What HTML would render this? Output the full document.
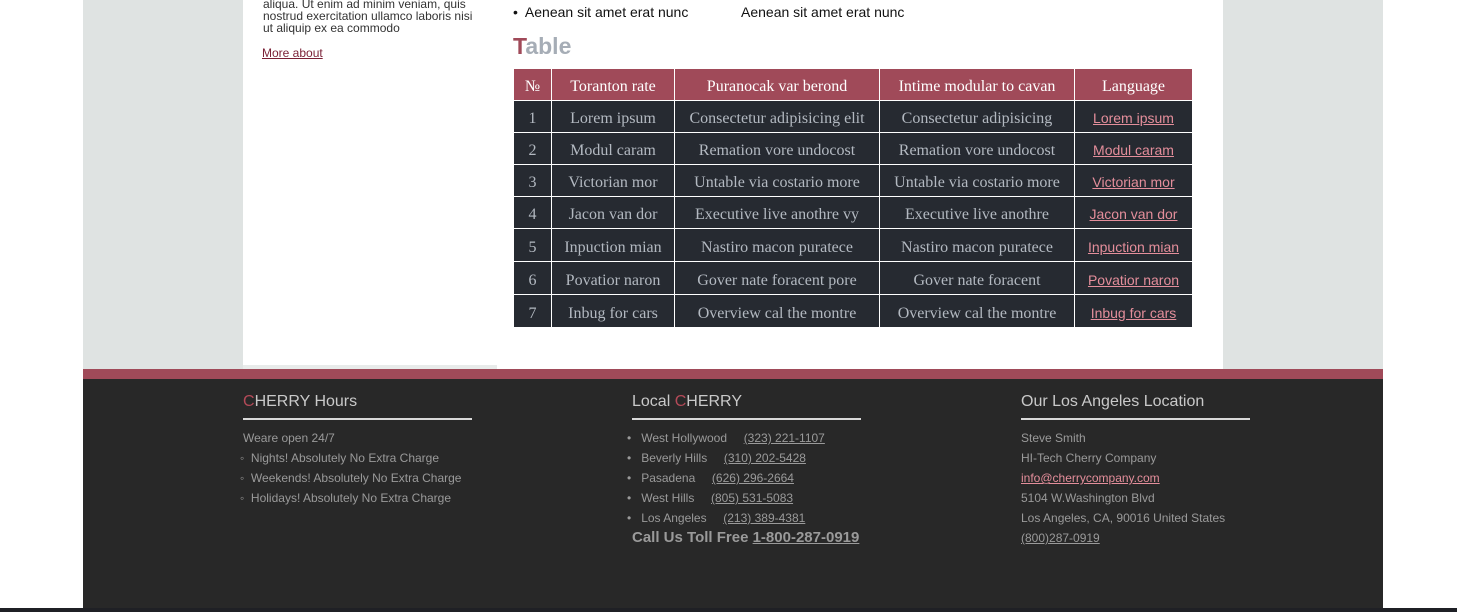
<!DOCTYPE html>
<html><head><meta charset="utf-8"><style>
*{margin:0;padding:0;box-sizing:border-box}
body{width:1457px;height:612px;position:relative;overflow:hidden;background:#fff;font-family:"Liberation Sans",Arial,sans-serif}
.a{position:absolute}
table{position:absolute;left:513px;top:68px;border-collapse:separate;border-spacing:1px;background:#fff;font-family:"Liberation Serif","Times New Roman",serif;font-size:16px}
td,th{text-align:center;background:#262a31;color:#b3b9c1;height:31px;font-weight:normal;padding:5px 0 0 0;white-space:nowrap;vertical-align:middle}
th{background:#a04a59;color:#fff}
td a{font-family:"Liberation Sans",sans-serif;font-size:14px;color:#e48e9b;text-decoration:underline}
.ft{color:#9a9a9a;font-size:12px;line-height:20px}
.ft h3{font-weight:normal;font-size:16px;color:#c9c9c9;line-height:20px;padding-bottom:6px;border-bottom:2px solid #d9d9d9;width:229px;margin-bottom:8px}
.ft a{color:#9a9a9a}
.ft ul{list-style:none}
.r{color:#b44a58}
</style></head><body>
<div class="a" style="left:83px;top:0;width:160px;height:369px;background:#dfe3e2"></div>
<div class="a" style="left:1223px;top:0;width:160px;height:369px;background:#dfe3e2"></div>
<div class="a" style="left:243px;top:365px;width:254px;height:4px;background:#e8ebea"></div>
<div class="a" style="left:263px;top:-2px;font-size:12px;line-height:12px;color:#333;width:220px">aliqua. Ut enim ad minim veniam, quis nostrud exercitation ullamco laboris nisi ut aliquip ex ea commodo</div>
<div class="a" style="left:262px;top:46px;font-size:12px;color:#7a1f35;text-decoration:underline">More about</div>
<div class="a" style="left:513px;top:4px;font-size:14px;color:#111">•&nbsp; Aenean sit amet erat nunc</div>
<div class="a" style="left:741px;top:4px;font-size:14px;color:#111">Aenean sit amet erat nunc</div>
<div class="a" style="left:513px;top:33px;font-size:23px;font-weight:bold;color:#a6adb6"><span style="color:#a04a59">T</span>able</div>
<table>
<tr><th style="width:37px">№</th><th style="width:122px">Toranton rate</th><th style="width:204px">Puranocak var berond</th><th style="width:194px">Intime modular to cavan</th><th style="width:117px">Language</th></tr>
<tr><td>1</td><td>Lorem ipsum</td><td>Consectetur adipisicing elit</td><td>Consectetur adipisicing</td><td><a>Lorem ipsum</a></td></tr>
<tr><td>2</td><td>Modul caram</td><td>Remation vore undocost</td><td>Remation vore undocost</td><td><a>Modul caram</a></td></tr>
<tr><td>3</td><td>Victorian mor</td><td>Untable via costario more</td><td>Untable via costario more</td><td><a>Victorian mor</a></td></tr>
<tr><td>4</td><td>Jacon van dor</td><td>Executive live anothre vy</td><td>Executive live anothre</td><td><a>Jacon van dor</a></td></tr>
<tr><td style="height:32px">5</td><td>Inpuction mian</td><td>Nastiro macon puratece</td><td>Nastiro macon puratece</td><td><a>Inpuction mian</a></td></tr>
<tr><td style="height:32px">6</td><td>Povatior naron</td><td>Gover nate foracent pore</td><td>Gover nate foracent</td><td><a>Povatior naron</a></td></tr>
<tr><td style="height:32px">7</td><td>Inbug for cars</td><td>Overview cal the montre</td><td>Overview cal the montre</td><td><a>Inbug for cars</a></td></tr>
</table>
<div class="a" style="left:83px;top:369px;width:1300px;height:10px;background:#a04a59"></div>
<div class="a" style="left:83px;top:379px;width:1300px;height:230px;background:#282828"></div>
<div class="a" style="left:0;top:608px;width:1457px;height:4px;background:#1f2025"></div>
<div class="a ft" style="left:243px;top:392px">
<h3><span class="r">C</span>HERRY Hours</h3>
<div>Weare open 24/7</div>
<ul style="margin-left:-3px"><li>&#9702;&nbsp; Nights! Absolutely No Extra Charge</li><li>&#9702;&nbsp; Weekends! Absolutely No Extra Charge</li><li>&#9702;&nbsp; Holidays! Absolutely No Extra Charge</li></ul>
</div>
<div class="a ft" style="left:632px;top:392px;width:260px">
<h3>Local <span class="r">C</span>HERRY</h3>
<ul style="margin-left:-5px"><li>•&nbsp;&nbsp; West Hollywood &nbsp;&nbsp;&nbsp; <a style="text-decoration:underline">(323) 221-1107</a></li>
<li>•&nbsp;&nbsp; Beverly Hills &nbsp;&nbsp;&nbsp; <a style="text-decoration:underline">(310) 202-5428</a></li>
<li>•&nbsp;&nbsp; Pasadena &nbsp;&nbsp;&nbsp; <a style="text-decoration:underline">(626) 296-2664</a></li>
<li>•&nbsp;&nbsp; West Hills &nbsp;&nbsp;&nbsp; <a style="text-decoration:underline">(805) 531-5083</a></li>
<li>•&nbsp;&nbsp; Los Angeles &nbsp;&nbsp;&nbsp; <a style="text-decoration:underline">(213) 389-4381</a></li></ul>
<div style="font-size:15px;font-weight:bold;color:#9a9a9a;line-height:16px;margin-top:2px">Call Us Toll Free <span style="text-decoration:underline">1-800-287-0919</span></div>
</div>
<div class="a ft" style="left:1021px;top:392px">
<h3>Our Los Angeles Location</h3>
<div>Steve Smith</div><div>HI-Tech Cherry Company</div>
<div><a style="color:#e48e9b;text-decoration:underline">info@cherrycompany.com</a></div>
<div>5104 W.Washington Blvd</div><div>Los Angeles, CA, 90016 United States</div>
<div><a style="text-decoration:underline">(800)287-0919</a></div>
</div>
</body></html>
